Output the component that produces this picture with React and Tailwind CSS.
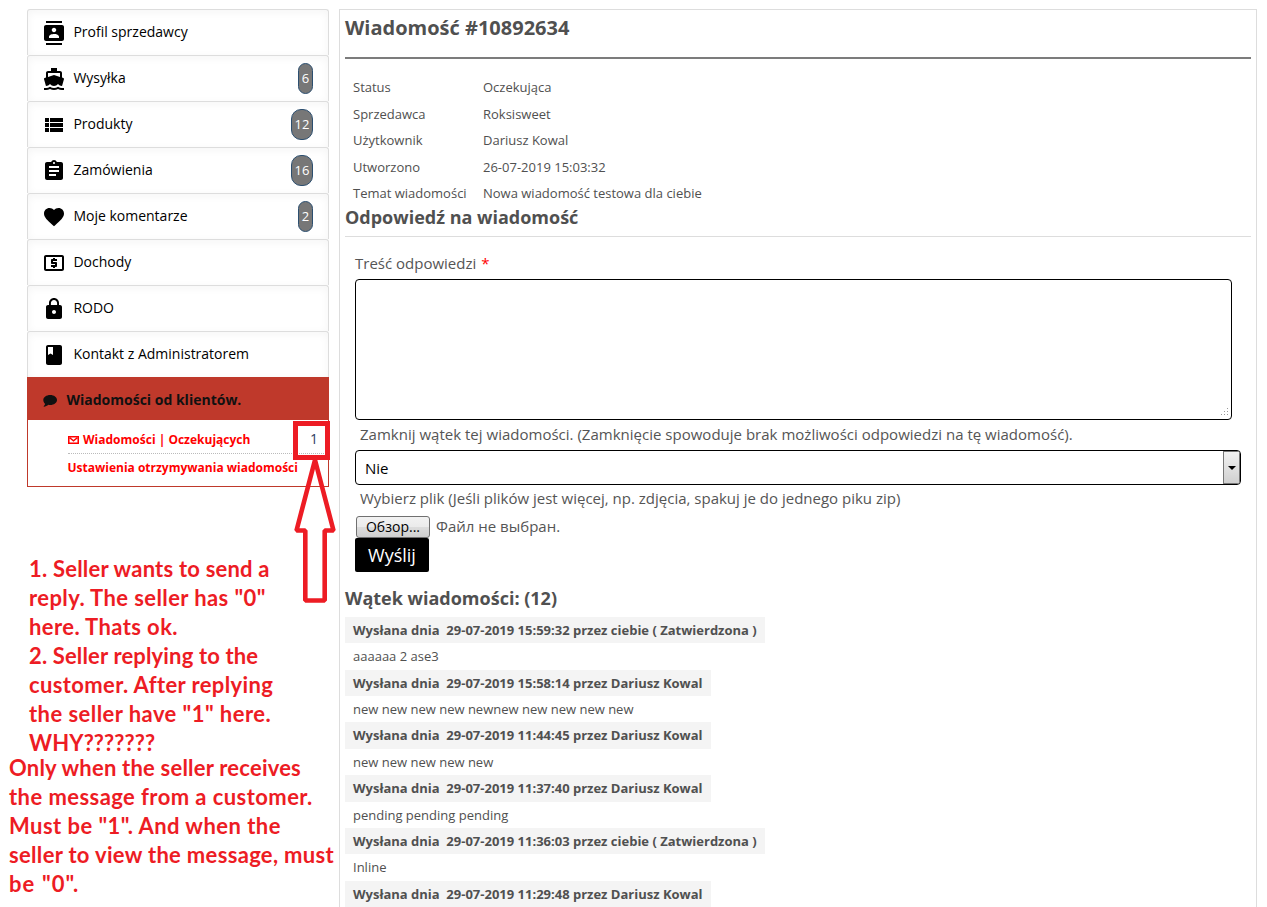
import {
  MdContacts,
  MdDirectionsBoat,
  MdViewList,
  MdAssignment,
  MdFavorite,
  MdLocalAtm,
  MdLock,
  MdClass,
} from "react-icons/md";

const menu = [
  { label: "Profil sprzedawcy", Icon: MdContacts },
  { label: "Wysyłka", Icon: MdDirectionsBoat, count: "6" },
  { label: "Produkty", Icon: MdViewList, count: "12" },
  { label: "Zamówienia", Icon: MdAssignment, count: "16" },
  { label: "Moje komentarze", Icon: MdFavorite, count: "2" },
  { label: "Dochody", Icon: MdLocalAtm },
  { label: "RODO", Icon: MdLock },
  { label: "Kontakt z Administratorem", Icon: MdClass },
];

const details = [
  ["Status", "Oczekująca"],
  ["Sprzedawca", "Roksisweet"],
  ["Użytkownik", "Dariusz Kowal"],
  ["Utworzono", "26-07-2019 15:03:32"],
  ["Temat wiadomości", "Nowa wiadomość testowa dla ciebie"],
];

const thread = [
  { time: "29-07-2019 15:59:32", by: "ciebie ( Zatwierdzona )", wide: true, text: "aaaaaa 2 ase3" },
  { time: "29-07-2019 15:58:14", by: "Dariusz Kowal", text: "new new new new newnew new new new new" },
  { time: "29-07-2019 11:44:45", by: "Dariusz Kowal", text: "new new new new new" },
  { time: "29-07-2019 11:37:40", by: "Dariusz Kowal", text: "pending pending pending" },
  { time: "29-07-2019 11:36:03", by: "ciebie ( Zatwierdzona )", wide: true, text: "Inline" },
  { time: "29-07-2019 11:29:48", by: "Dariusz Kowal", text: "" },
];

const noteA = [
  ["1. Seller wants to send a", "tracking-[0.21px]"],
  ["reply. The seller has \"0\"", "tracking-[0.4px]"],
  ["here. Thats ok.", "tracking-[0.4px]"],
  ["2. Seller replying to the", "tracking-[0.15px]"],
  ["customer. After replying", "tracking-[0.38px]"],
  ["the seller have \"1\" here.", "tracking-[0.44px]"],
  ["WHY???????", "tracking-[0.1px]"],
];

const noteB = [
  ["Only when the seller receives", "tracking-[0.21px]"],
  ["the message from a customer.", "tracking-[0.43px]"],
  ["Must be \"1\". And when the", "tracking-[0.46px]"],
  ["seller to view the message, must", "tracking-[0.32px]"],
  ["be \"0\".", "tracking-[1.1px]"],
];

function MenuItem({ label, Icon, count }) {
  return (
    <li className="flex h-[46px] items-center rounded-t-[3px] border border-b-0 border-[#ddd] pr-[15px] pl-[14.400px] shadow-[inset_0_2px_8px_#f5f5f5]">
      <Icon className="size-6 shrink-0 text-black" />
      <span className="ml-[7px] grow pb-[2px] text-[14px] leading-5 text-black">{label}</span>
      {count && (
        <span
          className={
            (count.length > 1 ? "w-[22px]" : "w-[15px]") +
            " flex h-[31px] items-center justify-center rounded-[10px] border border-[#2c4f70] bg-[#777] text-[13px] text-white"
          }
        >
          {count}
        </span>
      )}
    </li>
  );
}

function Sidebar() {
  return (
    <nav className="ml-[27px] w-[302px]">
      <ul>
        {menu.map((m) => (
          <MenuItem key={m.label} {...m} />
        ))}
      </ul>
      <div className="flex h-[43px] items-center bg-[#bf392b] pt-[2px] pl-[15.500px] text-[14px] font-bold text-[#111]">
        <svg viewBox="0 0 14 13" className="mt-px h-[13px] w-[14px]" fill="#111">
          <path d="M7.2 1C11 1 14 3.2 14 6s-3 5-6.800 5c-.6 0-1.200 0-1.800-.2C4 12 2.500 12.500 1 12.700c-.4 0-.5-.4-.2-.7.700-.6 1.200-1.300 1.200-2.200C.9 8.900.3 7.500.3 6c0-2.800 3.100-5 6.900-5z" />
        </svg>
        <span className="ml-[10px]">Wiadomości od klientów.</span>
      </div>
      <div className="h-[67px] border border-t-0 border-[#bf392b] pl-[40px] text-[12px] font-bold text-[#f00]">
        <div className="mr-[4px] flex h-[34px] items-center border-b border-dotted border-[#bbb] pt-[6px]">
          <svg viewBox="0 0 11 8" className="h-[8px] w-[11px]" fill="none" stroke="#f00" strokeWidth="1.600">
            <path d="M.75.75h9.500v6.500H.75zM2 2l3.500 2.800L9 2" />
          </svg>
          <span className="ml-[4px] grow">Wiadomości | Oczekujących</span>
          <span className="mr-[6px] pb-[2px] text-[14px] font-normal text-[#2d3e5e]">1</span>
        </div>
        <div className="-ml-[0.500px] h-[27px] leading-[27px] whitespace-nowrap">Ustawienia otrzymywania wiadomości</div>
      </div>
    </nav>
  );
}

function Notes() {
  return (
    <div className="font-['Lato',sans-serif] text-[22px] leading-[29px] font-bold whitespace-nowrap text-[#ed1c24]">
      <div className="mt-[67px] ml-[29px]">
        {noteA.map(([line, tracking]) => (
          <p key={line} className={tracking}>
            {line}
          </p>
        ))}
      </div>
      <div className="-mt-[4px] ml-[9px]">
        {noteB.map(([line, tracking]) => (
          <p key={line} className={tracking}>
            {line}
          </p>
        ))}
      </div>
    </div>
  );
}

function Marker() {
  return (
    <svg className="absolute top-[415px] left-[288px]" width="52" height="192" viewBox="288 415 52 192" fill="none" stroke="#ed1c24">
      <rect x="295.500" y="423.500" width="32" height="34" strokeWidth="5" />
      <path d="M315 460 296.500 530.500H305.300V600.500H324.700V530.500H333.500Z" strokeWidth="4.600" strokeLinejoin="bevel" />
    </svg>
  );
}

function ReplyForm() {
  return (
    <form className="ml-[10px] text-[15px] text-[#555]">
      <label className="mt-[15px] block h-[27px] leading-[22px]">
        Treść odpowiedzi <span className="ml-px text-[#f00]">*</span>
      </label>
      <div className="flex h-[141px] w-[877px] items-end justify-end rounded-[4px] border border-black p-[2px]">
        <svg width="9" height="9" fill="#999">
          <path d="M7 0h1v1h-1zM4 3h1v1h-1zM7 3h1v1h-1zM1 6h1v1h-1zM4 6h1v1h-1zM7 6h1v1h-1z" />
        </svg>
      </div>
      <p className="h-[30px] pl-[5px] leading-[28px] tracking-[0.01px]">
        Zamknij wątek tej wiadomości. (Zamknięcie spowoduje brak możliwości odpowiedzi na tę wiadomość).
      </p>
      <div className="flex h-[35px] w-[886px] justify-between overflow-hidden rounded-[4px] border border-black">
        <span className="pl-[9px] leading-[35px] text-black">Nie</span>
        <span className="flex w-[17px] items-center justify-center border border-[#777] bg-linear-to-b from-[#f2f2f2] to-[#d0d0d0]">
          <svg width="8" height="4" className="mt-px">
            <path d="M0 0h8L4 4z" />
          </svg>
        </span>
      </div>
      <p className="h-[30px] pl-[5px] leading-[27px]">
        Wybierz plik (Jeśli plików jest więcej, np. zdjęcia, spakuj je do jednego piku zip)
      </p>
      <div className="flex h-[23px] items-center">
        <span className="ml-px flex h-[22px] w-[74px] items-center justify-center rounded-[3px] border border-[#707070] bg-[linear-gradient(#f2f2f2,#ebebeb_50%,#dddddd_50%,#cfcfcf)] text-[14px] text-black">
          Обзор...
        </span>
        <span className="ml-[6px]">Файл не выбран.</span>
      </div>
      <button type="button" className="flex h-[34px] w-[74px] items-center justify-center rounded-[2px] bg-black text-[18px] text-white">
        Wyślij
      </button>
    </form>
  );
}

export default function App() {
  return (
    <div className="relative flex h-[907px] w-[1267px] overflow-hidden bg-white pt-[9px] font-['Open_Sans',sans-serif]">
      <div className="w-[339px] shrink-0">
        <Sidebar />
        <Notes />
      </div>
      <main className="h-[920px] w-[918px] shrink-0 border border-[#ddd] px-[5px] text-[13px] text-[#505050]">
        <h1 className="h-[49px] border-b-2 border-[#7c7c7c] pt-[4px] text-[20px] leading-[28px] font-bold">
          Wiadomość #10892634
        </h1>
        <dl className="mt-[15.300px] mb-[-0.300px] grid grid-cols-[130px_auto] pl-[8px] leading-[26.400px]">
          {details.map(([k, v]) => (
            <div key={k} className="contents">
              <dt>{k}</dt>
              <dd>{v}</dd>
            </div>
          ))}
        </dl>
        <h2 className="h-[31px] border-b border-[#ddd] text-[18px] leading-[22px] font-bold">Odpowiedź na wiadomość</h2>
        <ReplyForm />
        <h2 className="mt-[12px] h-[32.800px] text-[18px] leading-[28px] font-bold">Wątek wiadomości: (12)</h2>
        {thread.map((m) => (
          <article key={m.time} className="leading-[26.400px]">
            <h3
              className={(m.wide ? "w-[420px]" : "w-[366px]") + " h-[26.400px] bg-[#f4f4f4] pl-[8px] font-bold whitespace-pre"}
            >
              {"Wysłana dnia  " + m.time + " przez " + m.by}
            </h3>
            <p className="h-[26.400px] pl-[8px]">{m.text}</p>
          </article>
        ))}
      </main>
      <Marker />
    </div>
  );
}
